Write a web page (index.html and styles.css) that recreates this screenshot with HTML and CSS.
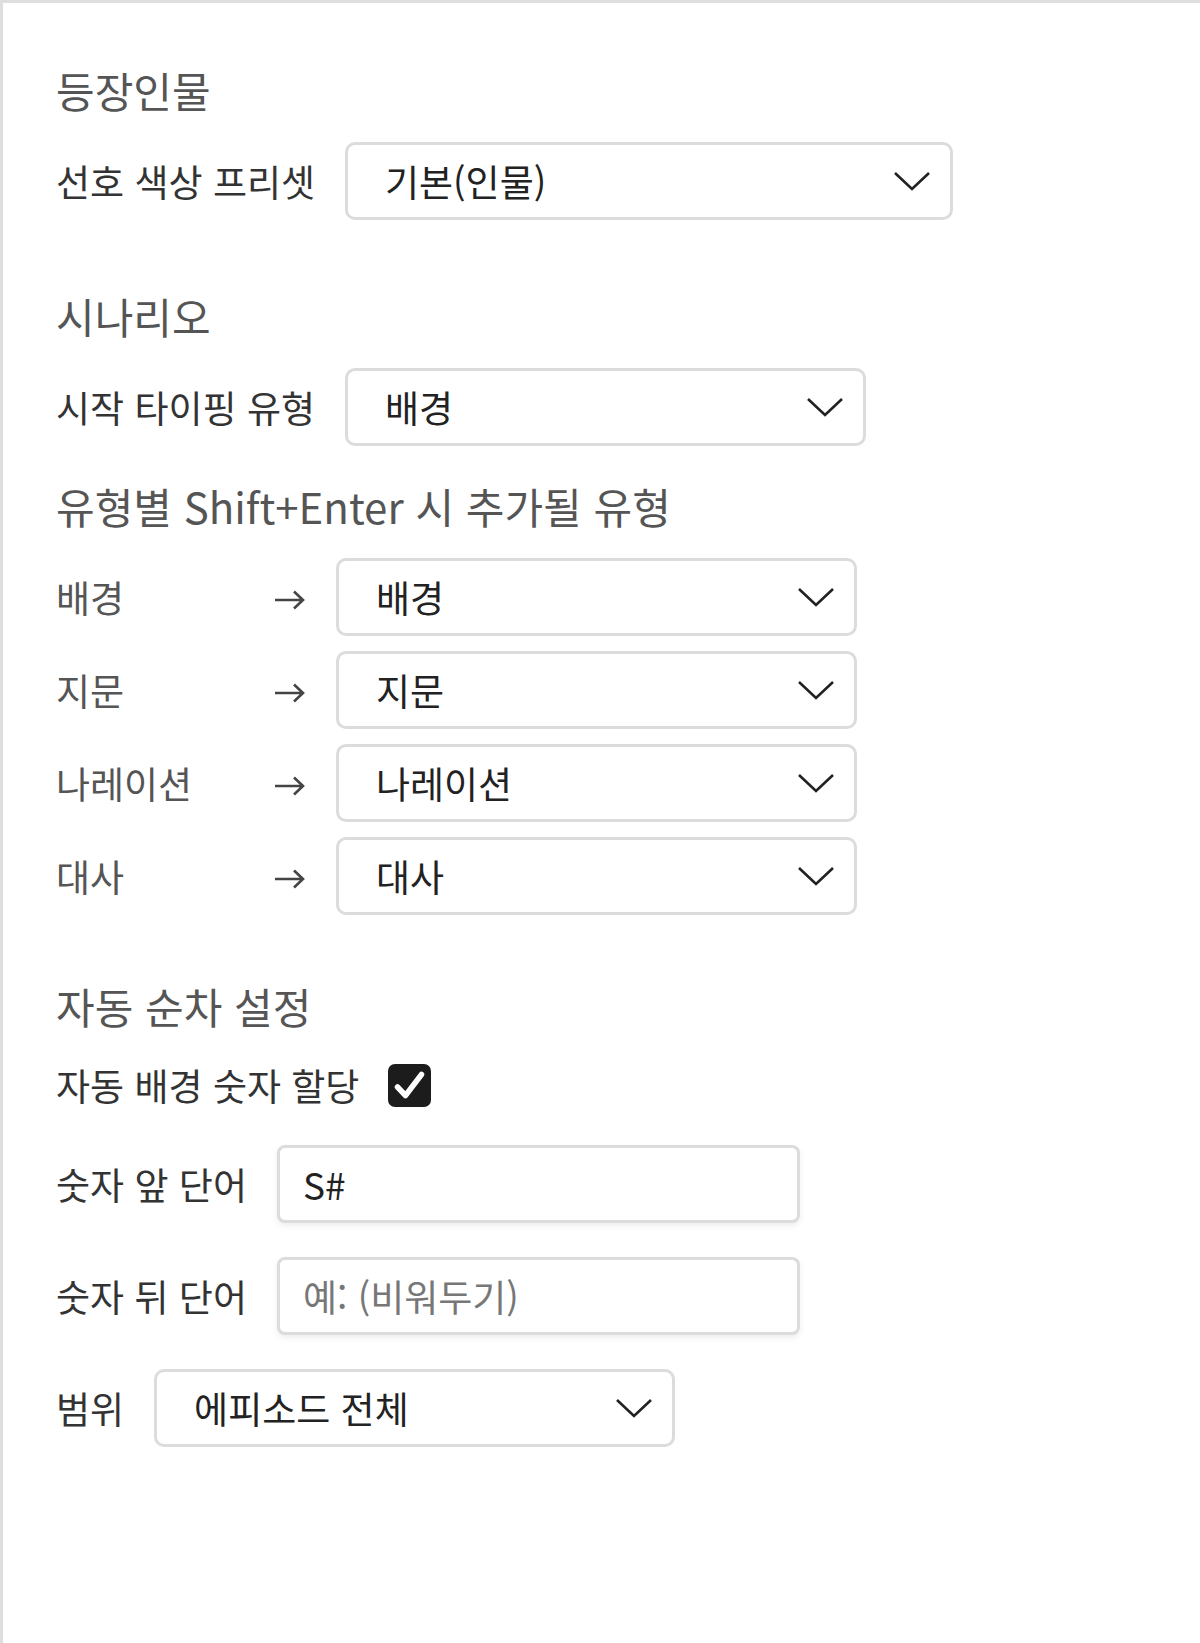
FILE: index.html
```html
<!DOCTYPE html>
<html lang="ko">
<head>
  <meta charset="UTF-8">
  <title>설정</title>
  <link rel="stylesheet" href="styles.css">
</head>
<body>
  <div class="panel">

    <section class="section">
      <h2 class="title">등장인물</h2>
      <div class="field">
        <span class="label">선호 색상 프리셋</span>
        <div class="select wide">
          <select>
            <option>기본(인물)</option>
          </select>
          <svg class="chevron" width="38" height="20" viewBox="0 0 38 20"><path d="M2 2 L19 18 L36 2"/></svg>
        </div>
      </div>
    </section>

    <section class="section">
      <h2 class="title">시나리오</h2>
      <div class="field">
        <span class="label">시작 타이핑 유형</span>
        <div class="select">
          <select>
            <option>배경</option>
          </select>
          <svg class="chevron" width="38" height="20" viewBox="0 0 38 20"><path d="M2 2 L19 18 L36 2"/></svg>
        </div>
      </div>

      <h3 class="title sub">유형별 Shift+Enter 시 추가될 유형</h3>
      <div class="next-list" id="nextList"></div>
    </section>

    <section class="section last">
      <h2 class="title">자동 순차 설정</h2>
      <div class="field check-row">
        <span class="label">자동 배경 숫자 할당</span>
        <span class="check">
          <svg width="43" height="43" viewBox="0 0 43 43"><path d="M9.5 23 L17.5 31.5 L33.5 10.5"/></svg>
        </span>
      </div>
      <div class="field gap-in">
        <span class="label">숫자 앞 단어</span>
        <input class="text" type="text" value="S#">
      </div>
      <div class="field gap-in2">
        <span class="label">숫자 뒤 단어</span>
        <input class="text" type="text" placeholder="예: (비워두기)">
      </div>
      <div class="field gap-in2">
        <span class="label">범위</span>
        <div class="select">
          <select>
            <option>에피소드 전체</option>
          </select>
          <svg class="chevron" width="38" height="20" viewBox="0 0 38 20"><path d="M2 2 L19 18 L36 2"/></svg>
        </div>
      </div>
    </section>

  </div>

  <script>
    const types = ["배경", "지문", "나레이션", "대사"];
    const list = document.getElementById('nextList');

    types.forEach(type => {
      const row = document.createElement('div');
      row.className = 'next-row';
      row.innerHTML =
        '<span class="label muted">' + type + '</span>' +
        '<svg class="arrow" width="32" height="20" viewBox="0 0 32 20"><path d="M1 10 H29 M20 1.5 L29 10 L20 18.5"/></svg>' +
        '<div class="select"><select><option>' + type + '</option></select>' +
        '<svg class="chevron" width="38" height="20" viewBox="0 0 38 20"><path d="M2 2 L19 18 L36 2"/></svg></div>';
      list.appendChild(row);
    });
  </script>
</body>
</html>
```

FILE: styles.css
```css
body {
  margin: 0;
  padding: 0;
  background: #fff;
  font-family: 'Noto Sans CJK KR', 'Noto Sans', sans-serif;
  color: #333;
}

.panel {
  box-sizing: border-box;
  min-height: 100vh;
  border-top: 3px solid #dedede;
  border-left: 3px solid #dedede;
  padding: 63px 40px 40px 53px;
}

.section {
  display: flex;
  flex-direction: column;
  align-items: flex-start;
  margin-bottom: 72px;
}

.section.last {
  margin-top: -5px;
}

.title {
  margin: 0 0 29px 0;
  font-size: 42px;
  line-height: 47px;
  font-weight: 400;
  color: #555;
}

.title.sub {
  margin-top: 36px;
}

.field {
  display: flex;
  align-items: center;
  gap: 30px;
}

.label {
  font-size: 37px;
  line-height: 51px;
  color: #333;
  white-space: nowrap;
}

.label.muted {
  color: #555;
}

.select {
  position: relative;
  width: 521px;
  height: 78px;
}

.select.wide {
  width: 608px;
}

.select select {
  appearance: none;
  -webkit-appearance: none;
  box-sizing: border-box;
  width: 100%;
  height: 100%;
  margin: 0;
  padding: 0 70px 0 37px;
  border: 3px solid #dcdcdc;
  border-radius: 10px;
  background: #fff;
  font-family: inherit;
  font-size: 37px;
  color: #222;
  outline: none;
}

.chevron {
  position: absolute;
  right: 22px;
  top: 50%;
  margin-top: -10px;
  fill: none;
  stroke: #222;
  stroke-width: 2.6;
  pointer-events: none;
}

.next-list {
  display: flex;
  flex-direction: column;
  gap: 15px;
}

.next-row {
  display: grid;
  grid-template-columns: 188px 32px 523px;
  column-gap: 30px;
  align-items: center;
}

.arrow {
  fill: none;
  stroke: #444;
  stroke-width: 2.6;
  margin-top: 6px;
}

.check-row {
  margin-top: 2px;
  gap: 29px;
}

.check {
  display: flex;
  width: 43px;
  height: 43px;
  border-radius: 7px;
  background: #1c1c1c;
}

.check svg {
  fill: none;
  stroke: #fff;
  stroke-width: 5.5;
  stroke-linecap: round;
  stroke-linejoin: round;
}

.gap-in {
  margin-top: 34px;
}

.gap-in2 {
  margin-top: 34px;
}

.text {
  box-sizing: border-box;
  width: 523px;
  height: 78px;
  margin: 0;
  padding: 0 23px;
  border: 3px solid #dcdcdc;
  border-radius: 8px;
  box-shadow: 0 3px 6px rgba(0, 0, 0, 0.07);
  font-family: inherit;
  font-size: 37px;
  color: #222;
  outline: none;
}

.text::placeholder {
  color: #777;
}
```
